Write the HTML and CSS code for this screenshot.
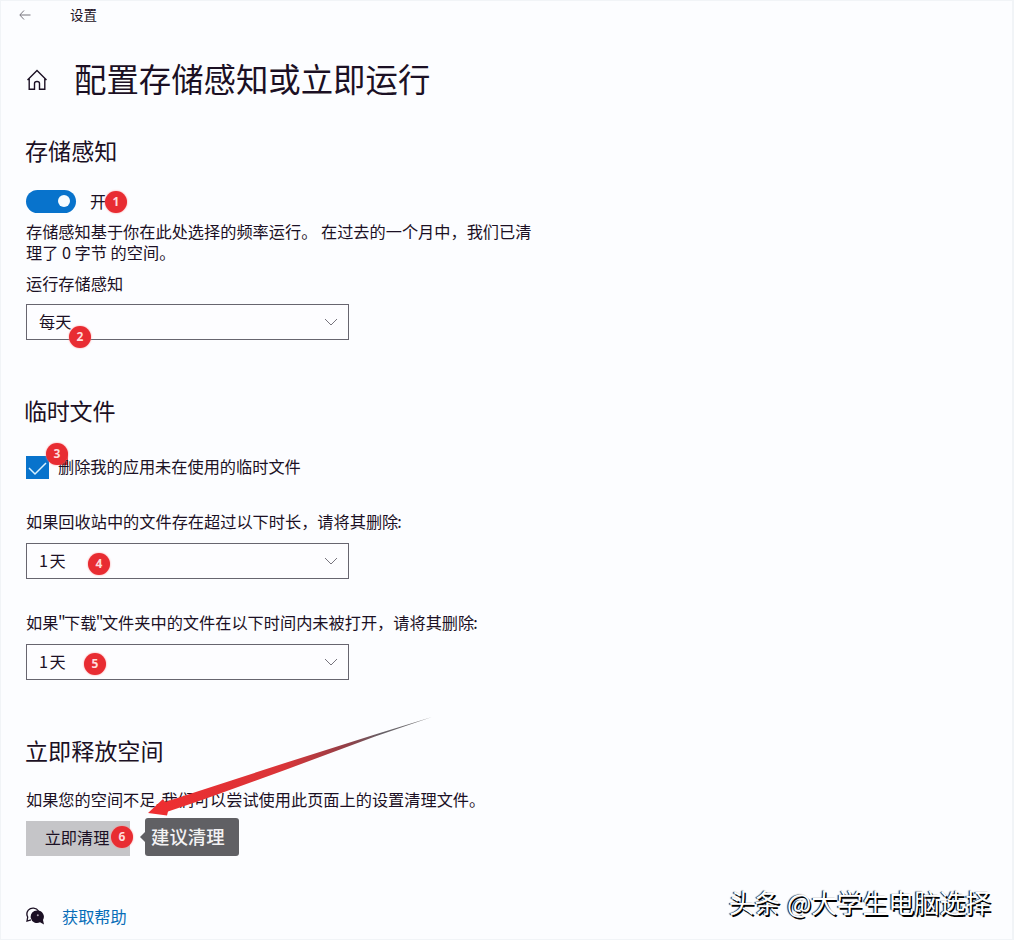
FILE: index.html
```html
<!DOCTYPE html>
<html lang="zh-CN">
<head>
<meta charset="utf-8">
<title>设置</title>
<link rel="stylesheet" href="styles.css">
</head>
<body>
<div class="window">
  <header class="titlebar">
    <svg class="back" width="12" height="12" viewBox="0 0 12 12"><path d="M11.500 6H1M5 1.500L.8 6L5 10.500"/></svg>
    <span>设置</span>
  </header>
  <div class="page-head">
    <svg class="home" width="22" height="22" viewBox="0 0 22 22"><path d="M1.500 11L11 1.500L20.500 11M3.200 9.500V20.200H8.500V14.500Q8.500 12.500 11 12.500T13.500 14.500V20.200H18.800V9.500"/></svg>
    <h1>配置存储感知或立即运行</h1>
  </div>
  <main>
    <section class="sense">
      <h2>存储感知</h2>
      <div class="toggle-row"><span class="toggle"><i></i></span><span class="anchor">开<b class="badge b1">1</b></span></div>
      <p class="intro">存储感知基于你在此处选择的频率运行。 在过去的一个月中，我们已清<br>理了 0 字节 的空间。</p>
      <p class="label">运行存储感知</p>
      <div class="select"><span>每天</span><svg width="14" height="8" viewBox="0 0 14 8"><path d="M1 1L7 7L13 1"/></svg><b class="badge b2">2</b></div>
    </section>
    <section class="temp">
      <h2>临时文件</h2>
      <div class="check-row">
        <span class="checkbox"><svg width="23" height="23" viewBox="0 0 23 23"><path d="M3 12L9 18L20 7"/></svg></span>
        <span>删除我的应用未在使用的临时文件</span>
        <b class="badge b3">3</b>
      </div>
      <p class="label">如果回收站中的文件存在超过以下时长，请将其删除<span class="colon">:</span></p>
      <div class="select days"><span>1 天</span><svg width="14" height="8" viewBox="0 0 14 8"><path d="M1 1L7 7L13 1"/></svg><b class="badge b4">4</b></div>
      <p class="label second">如果<span class="quote">"</span>下载<span class="quote">"</span>文件夹中的文件在以下时间内未被打开，请将其删除<span class="colon">:</span></p>
      <div class="select days"><span>1 天</span><svg width="14" height="8" viewBox="0 0 14 8"><path d="M1 1L7 7L13 1"/></svg><b class="badge b5">5</b></div>
    </section>
    <section class="free">
      <h2>立即释放空间</h2>
      <p class="label">如果您的空间不足<span class="comma">,</span>我们可以尝试使用此页面上的设置清理文件。</p>
      <div class="action">
        <button class="clean">立即清理</button>
        <b class="badge b6">6</b>
        <span class="tip">建议清理</span>
        <svg class="arrow" width="290" height="106" viewBox="0 0 290 106">
          <defs><linearGradient id="fade" x1="0" x2="1" y1="0" y2="0"><stop offset="0" stop-color="#f02d30"/><stop offset=".48" stop-color="#d93539"/><stop offset=".7" stop-color="#923f47"/><stop offset=".82" stop-color="#666066"/><stop offset="1" stop-color="#777"/></linearGradient></defs>
          <path fill="url(#fade)" d="M2 99L17 85L19 88L56 76L139 49L229 20.500L286 3L229 22.500L139 56L56 86L22 97.500L21 101.500Z"/>
        </svg>
      </div>
    </section>
    <div class="help">
      <svg width="19" height="18" viewBox="0 0 19 18"><path d="M12.500 4C10.500 .5 5 0 2.300 3.200C.5 5.500 .6 8 1.700 10L1 14L5 12.800" fill="none" stroke="#1b1024" stroke-width="1.300"/><path d="M11.500 3.500A6.300 6.300 0 1 0 14 15.300L18 17.500L17 13A6.300 6.300 0 0 0 11.500 3.500Z" fill="#1b1024"/><circle cx="11.800" cy="8.300" r="1" fill="#aaa2ad"/></svg>
      <a>获取帮助</a>
    </div>
  </main>
  <div class="watermark">头条 @大学生电脑选择</div>
</div>
</body>
</html>
```
FILE: styles.css
```css
* { box-sizing: border-box; }
body { margin: 0; background: #fcfdff; }
.window {
  position: relative;
  width: 1014px;
  height: 940px;
  overflow: hidden;
  border: 1px solid #f1f4f7;
  border-width: 1px 2px 1px 1px;
  color: #1b1024;
  font-family: "Noto Sans CJK SC", sans-serif;
  font-size: 16.2px;
}
h1, h2, p { margin: 0; font-weight: 400; white-space: nowrap; }
svg { display: block; fill: none; flex: none; }
.titlebar { display: flex; align-items: center; gap: 39px; height: 27px; padding-left: 18px; font-size: 13.5px; }
.titlebar span { height: 20px; line-height: 18px; }
.back { stroke: #77747d; }
.page-head { display: flex; align-items: center; gap: 26px; height: 60px; margin-top: 22px; padding-left: 25px; }
.home { stroke: #1b1024; stroke-width: 1.4; }
h1 { height: 60px; font-size: 32.4px; line-height: 56px; }
main { padding-left: 25px; }
h2 { margin-left: -1px; font-size: 23.1px; line-height: 38px; height: 40px; }
.sense { padding-top: 21px; }
.toggle-row { display: flex; align-items: center; gap: 14px; height: 24px; margin-top: 18px; }
.toggle { display: flex; align-items: center; justify-content: flex-end; width: 50px; height: 23px; padding-right: 6px; border-radius: 12px; background: #0873cc; }
.toggle i { width: 12px; height: 12px; border-radius: 50%; background: #f7fcff; }
.anchor { position: relative; }
.badge {
  position: absolute;
  width: 22px;
  height: 22px;
  border-radius: 50%;
  background: #e82c32;
  box-shadow: 0 0 2px #ff8d8d;
  color: #ffdcdc;
  font: 700 12px/22px "Open Sans", sans-serif;
  text-align: center;
}
.b1 { left: 15px; top: 2px; }
.b2 { left: 42px; top: 21px; }
.b3 { left: 20px; top: -12px; }
.b3::before { content: ""; position: absolute; z-index: -1; right: 0; bottom: 0; width: 11px; height: 11px; background: #e82c32; }
.b4 { left: 61px; top: 9px; }
.b5 { left: 57px; top: 8px; }
.b6 { left: 85px; top: 5px; }
.intro { height: 41px; margin-top: 8px; line-height: 20.5px; }
.label { height: 24px; line-height: 24px; }
.sense .label { margin-top: 9px; }
.colon { margin-left: -1px; }
.quote { display: inline-block; width: 5.6px; text-indent: -.5px; }
.comma { display: inline-block; width: 6px; }
.select {
  position: relative;
  display: flex;
  align-items: center;
  justify-content: space-between;
  width: 323px;
  height: 36px;
  margin-top: 9px;
  padding: 0 10px 0 12px;
  border: 1px solid #67656f;
  background: #fdfdff;
}
.select > span { height: 24px; line-height: 22px; }
.days > span { word-spacing: -2px; }
.select svg { stroke: #77747d; }
.temp { padding-top: 51px; }
.temp h2 { margin-left: -2px; letter-spacing: -.3px; }
.check-row { position: relative; display: flex; align-items: center; gap: 9px; height: 24px; margin-top: 24px; }
.check-row > span:nth-child(2) { height: 24px; line-height: 22px; }
.checkbox { width: 23px; height: 23px; background: #0873cc; }
.checkbox svg { stroke: #d8f1ff; stroke-width: 1.5; }
.temp .label { margin-top: 31px; line-height: 22px; }
.temp .second { margin-top: 32px; }
.free { padding-top: 51px; }
.free .label { margin-top: 17px; line-height: 22px; }
.action { position: relative; display: flex; height: 35px; margin-top: 9px; }
.clean { width: 104px; height: 35px; padding: 0 2px 3px 0; border: 0; background: #c5c5c8; color: #1b1024; font: inherit; line-height: 32px; }
.tip {
  position: absolute;
  left: 119px;
  top: -3px;
  width: 94px;
  height: 38px;
  border-radius: 3px;
  background: #606064;
  color: #f3f2f3;
  font-size: 18.4px;
  font-weight: 500;
  line-height: 37px;
  padding-left: 6px;
}
.tip::before { content: ""; position: absolute; left: -5px; top: 14px; border: solid transparent; border-width: 5px 5px 5px 0; border-right-color: #606064; }
.arrow { position: absolute; left: 120px; top: -107px; }
.help { display: flex; align-items: center; gap: 17px; height: 24px; margin-top: 48px; color: #086db8; }
.watermark {
  position: absolute;
  right: 21px;
  top: 881px;
  color: #fff;
  font-size: 25.7px;
  line-height: 40px;
  word-spacing: 1px;
  white-space: nowrap;
  text-shadow: 1.5px 1.5px 0 #000, -1px 0 1px #000;
}
```
